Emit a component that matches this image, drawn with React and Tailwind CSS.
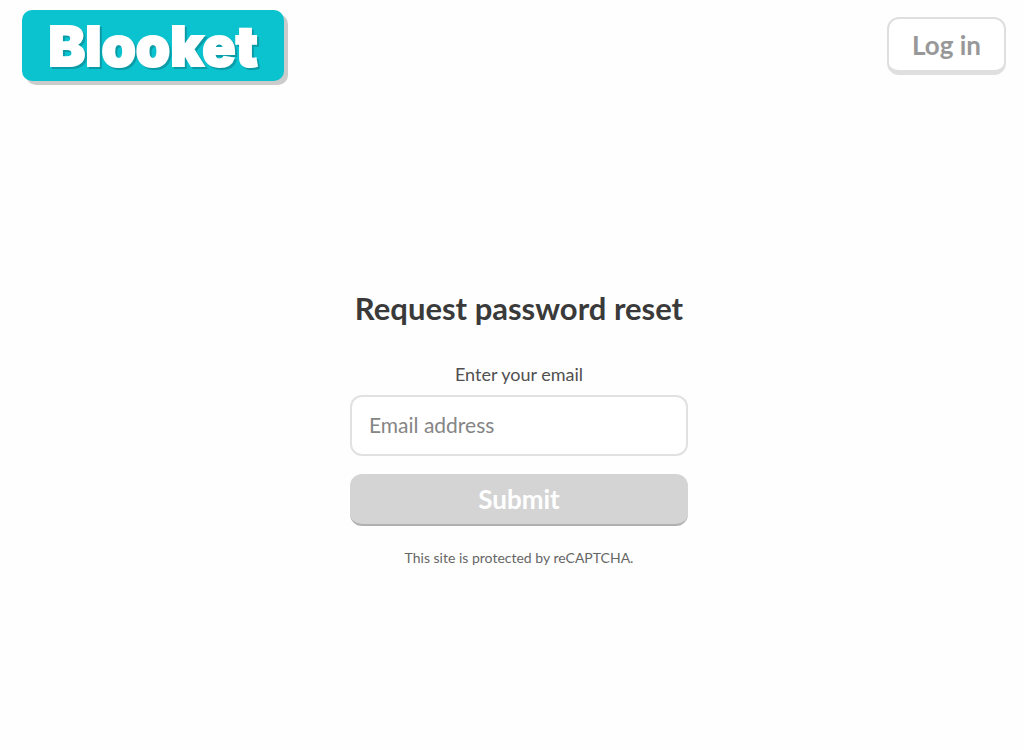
import { useState } from 'react';

export default function App() {
  const [email, setEmail] = useState('');

  const handleSubmit = (e) => {
    e.preventDefault();
  };

  return (
    <div className="min-h-screen flex flex-col bg-[#fefefe] font-['Lato',sans-serif] text-[#3a3a3a]">
      {/* Header */}
      <header className="flex items-start justify-between pt-[10px] pl-[22px] pr-[18px]">
        <a
          href="#"
          className="flex items-center justify-center w-[262px] h-[71px] pt-0.5 rounded-[10px] bg-[#0bc2cf] shadow-[4px_4px_0_#cbcbcb]"
        >
          <span className="text-white text-[55px] leading-none font-black font-['Inter',sans-serif] [-webkit-text-stroke:2px_white] drop-shadow-[2px_2px_0_#0a9ba6]">
            Blooket
          </span>
        </a>
        <button
          type="button"
          className="mt-[7px] h-[58px] px-[23px] rounded-xl border-2 border-b-[5px] border-[#dfdfdf] bg-white text-[26px] leading-none font-bold text-[#989898]"
        >
          Log in
        </button>
      </header>

      {/* Reset form */}
      <main className="flex-1 flex flex-col items-center pt-[209px] pl-[14px]">
        <h1 className="text-[31px] leading-9 font-bold">Request password reset</h1>
        <form onSubmit={handleSubmit} className="w-[338px] mt-9 flex flex-col items-center">
          <label htmlFor="email" className="text-lg leading-6 text-[#505050]">Enter your email</label>
          <input
            id="email"
            type="email"
            value={email}
            onChange={(e) => setEmail(e.target.value)}
            placeholder="Email address"
            className="mt-[9px] w-full h-[61px] px-[17px] pb-0.5 rounded-xl border-2 border-[#e1e1e1] bg-white text-[21px] outline-none placeholder:text-[#858585]"
          />
          <button
            type="submit"
            disabled={!email}
            className="mt-[18px] w-full h-[52px] rounded-xl border-b-2 border-[#b0b0b0] bg-[#d4d4d4] text-[26px] leading-none font-bold text-white"
          >
            Submit
          </button>
        </form>
        <p className="mt-[22px] text-sm leading-5 text-[#666]">This site is protected by reCAPTCHA.</p>
      </main>
    </div>
  );
}
